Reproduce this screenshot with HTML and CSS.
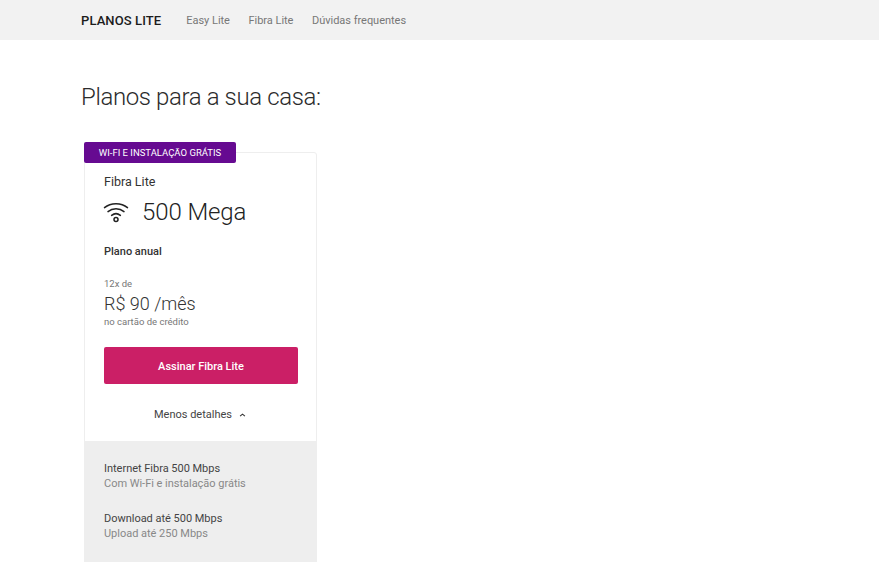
FILE: index.html
```html
<!DOCTYPE html>
<html lang="pt-BR">
<head>
    <meta charset="UTF-8">
    <title>Planos Lite</title>
    <link rel="stylesheet" href="styles.css">
</head>
<body>
    <nav class="navbar">
        <a class="brand">PLANOS LITE</a>
        <a class="nav-link">Easy Lite</a>
        <a class="nav-link">Fibra Lite</a>
        <a class="nav-link">Dúvidas frequentes</a>
    </nav>

    <main class="content">
        <h1>Planos para a sua casa:</h1>

        <div class="card">
            <div class="badge">WI-FI E INSTALAÇÃO GRÁTIS</div>
            <div class="card-body">
                <div class="plan-name">Fibra Lite</div>
                <div class="plan-speed">
                    <svg class="wifi-icon" viewBox="0 0 26 22" fill="none" stroke="#222" stroke-width="1.5" stroke-linecap="round">
                        <path d="M1.5 6.6C7.8 1.3 18.2 1.3 24.5 6.6"/>
                        <path d="M5 10.6C9.5 6.8 16.5 6.8 21 10.6"/>
                        <path d="M8.6 14.4C11.2 12.3 14.8 12.3 17.4 14.4"/>
                        <circle cx="13" cy="18.6" r="2"/>
                    </svg>
                    <span>500 Mega</span>
                </div>
                <div class="plan-type">Plano anual</div>
                <div class="price-note">12x de</div>
                <div class="price">R$ 90 /mês</div>
                <div class="price-note">no cartão de crédito</div>
                <button class="subscribe">Assinar Fibra Lite</button>
                <div class="toggle">
                    Menos detalhes
                    <svg class="chevron" viewBox="0 0 8 5" fill="none" stroke="#333" stroke-width="1.4">
                        <path d="M1 4L4 1.4L7 4"/>
                    </svg>
                </div>
            </div>
            <div class="details">
                <div class="detail-group">
                    <div class="detail-main">Internet Fibra 500 Mbps</div>
                    <div class="detail-sub">Com Wi-Fi e instalação grátis</div>
                </div>
                <div class="detail-group">
                    <div class="detail-main">Download até 500 Mbps</div>
                    <div class="detail-sub">Upload até 250 Mbps</div>
                </div>
            </div>
        </div>
    </main>
</body>
</html>
```

FILE: styles.css
```css
* {
    box-sizing: border-box;
    margin: 0;
    padding: 0;
}

body {
    font-family: Roboto, sans-serif;
    background: #fff;
    color: #222;
}

.navbar {
    height: 40px;
    background: #f2f2f2;
    display: flex;
    align-items: center;
    padding-left: 81px;
}

.brand {
    font-size: 13px;
    font-weight: 500;
    letter-spacing: 0.1px;
    color: #1c1c1c;
    margin-right: 25px;
}

.nav-link {
    font-size: 11px;
    letter-spacing: -0.02px;
    color: #777;
    margin-right: 18.5px;
}

.content {
    padding-left: 81px;
}

h1 {
    font-size: 24px;
    font-weight: 300;
    letter-spacing: -0.38px;
    line-height: 30px;
    color: #2b2b2b;
    margin-top: 42px;
}

.card {
    position: relative;
    width: 233px;
    margin: 40px 0 0 3px;
    background: #fff;
    border: 1px solid #eee;
    border-radius: 3px 3px 0 0;
}

.badge {
    position: absolute;
    top: -11px;
    left: -1px;
    width: 152px;
    height: 21px;
    background: #660a91;
    color: #fff;
    border-radius: 2px;
    font-size: 9.5px;
    font-weight: 400;
    line-height: 21px;
    text-align: center;
}

.card-body {
    padding: 21px 19px 0;
    height: 288px;
}

.plan-name {
    font-size: 12.5px;
    line-height: 15px;
    color: #333;
}

.plan-speed {
    display: flex;
    align-items: center;
    gap: 13px;
    margin-top: 7px;
    font-size: 24px;
    font-weight: 300;
    letter-spacing: -0.1px;
    line-height: 32px;
    color: #222;
}

.wifi-icon {
    width: 26px;
    height: 22px;
    margin-left: -1px;
}

.plan-type {
    font-size: 11px;
    font-weight: 500;
    line-height: 14px;
    color: #333;
    margin-top: 17px;
    margin-bottom: 19px;
}

.price-note {
    font-size: 9.5px;
    line-height: 12px;
    color: #777;
}

.price {
    font-size: 18px;
    font-weight: 300;
    line-height: 22px;
    color: #333;
    margin-top: 3px;
    margin-bottom: 1px;
}

.subscribe {
    display: block;
    width: 194px;
    height: 37px;
    margin-top: 19px;
    padding-top: 1px;
    background: #cb1f66;
    color: #fff;
    border: none;
    border-radius: 2px;
    font-family: Roboto, sans-serif;
    font-size: 11px;
    font-weight: 500;
}

.toggle {
    display: flex;
    align-items: center;
    justify-content: center;
    gap: 7px;
    margin-top: 24px;
    padding-right: 1px;
    font-size: 11px;
    line-height: 14px;
    color: #444;
}

.chevron {
    width: 7px;
    height: 4px;
}

.details {
    background: #eee;
    padding: 20px 19px 0;
    height: 121px;
}

.detail-group {
    margin-bottom: 20px;
    font-size: 11px;
    letter-spacing: -0.02px;
    line-height: 15px;
}

.detail-main {
    color: #444;
}

.detail-sub {
    color: #888;
}
```
